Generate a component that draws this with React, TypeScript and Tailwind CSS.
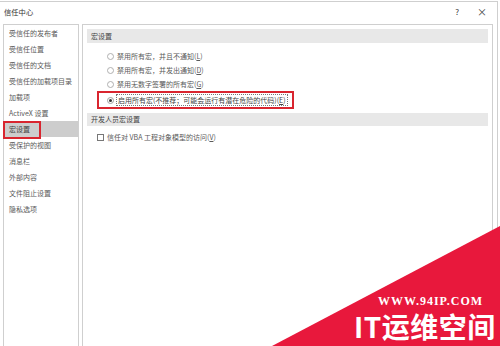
import React from "react";

const font = { fontFamily: '"Noto Sans CJK SC", "Noto Sans", sans-serif' };

function U({ c }: { c: string }) {
  return <span className="underline underline-offset-1">{c}</span>;
}

export default function App() {
  const nav = [
    "受信任的发布者",
    "受信任位置",
    "受信任的文档",
    "受信任的加载项目录",
    "加载项",
    "ActiveX 设置",
    "宏设置",
    "受保护的视图",
    "消息栏",
    "外部内容",
    "文件阻止设置",
    "隐私选项",
  ];
  return (
    <div
      className="relative w-[500px] h-[346px] overflow-hidden bg-white pt-[1px] pr-[2px] text-[7px] text-[#5a5a5a]"
      style={font}
    >
      <div className="h-[345px] border-t border-r border-[#cfcfcf] flex flex-col">
        {/* title bar */}
        <div className="h-[22px] flex items-start pt-[3px] pl-[4px] pr-[10px] text-[#333] leading-[14px]">
          <span className="text-[7.3px]">信任中心</span>
          <span className="ml-auto text-[8px]">?</span>
          <span className="ml-[18px] text-[10px] leading-[13px] text-[#444]">×</span>
        </div>
        {/* body */}
        <div className="flex-1 flex pl-[3px] pr-[4px] gap-[3px]">
          <div className="w-[76px] border-l border-r border-t border-[#cfcfcf] flex flex-col">
            {nav.map((n) =>
              n === "宏设置" ? (
                <div key={n} className="relative h-[16px] leading-[16px] pl-[5px] bg-[#cdcdcd] text-[#444]">
                  {n}
                  <span className="absolute -left-[1px] top-0 w-[38px] h-[18px] border-2 border-[#d9252f]" />
                </div>
              ) : (
                <div key={n} className="h-[16px] leading-[16px] pl-[5px]">
                  {n}
                </div>
              )
            )}
          </div>
          <div className="flex-1 border-l border-r border-t border-[#cfcfcf] pt-[4px] px-[4px]">
            <div className="h-[14px] leading-[14px] bg-[#e8e8e8] pl-[4px] text-[#444]">宏设置</div>
            <div className="mt-[6px] flex flex-col">
              {[
                ["禁用所有宏，并且不通知(", "L", ")"],
                ["禁用所有宏，并发出通知(", "D", ")"],
                ["禁用无数字签署的所有宏(", "G", ")"],
              ].map(([a, b, c]) => (
                <div key={a} className="h-[14px] flex items-center pl-[20px]">
                  <span className="w-[7px] h-[7px] rounded-full border border-[#b0b0b0] bg-white" />
                  <span className="ml-[3px] leading-[10px]">
                    {a}
                    <U c={b} />
                    {c}
                  </span>
                </div>
              ))}
              <div className="ml-[10px] w-[197px] h-[18px] border-2 border-[#d9252f] flex items-center pl-[8px]">
                <span className="w-[7px] h-[7px] rounded-full border border-[#a0a0a0] bg-white flex items-center justify-center">
                  <span className="w-[3px] h-[3px] rounded-full bg-[#333]" />
                </span>
                <span className="ml-[2px] px-[1px] border border-dotted border-[#777] leading-[10px] text-[#444]">
                  启用所有宏(不推荐；可能会运行有潜在危险的代码)(<U c="E" />)
                </span>
              </div>
            </div>
            <div className="mt-[4px] h-[13px] leading-[13px] bg-[#e8e8e8] pl-[4px] text-[#444]">开发人员宏设置</div>
            <div className="mt-[4px] h-[14px] flex items-center pl-[10px]">
              <span className="w-[7px] h-[7px] border border-[#777] bg-white" />
              <span className="ml-[3px] leading-[10px]">
                信任对 VBA 工程对象模型的访问(<U c="V" />)
              </span>
            </div>
          </div>
        </div>
      </div>

      {/* watermark overlay */}
      <svg className="absolute left-0 top-0" width="500" height="346" viewBox="0 0 500 346">
        <polygon points="500,226 500,346 272,346" fill="#e8183c" />
      </svg>
      <div
        className="absolute left-[378px] top-[295px] text-white font-bold text-[12px] leading-[12px] tracking-[1px]"
        style={{ fontFamily: '"Liberation Serif", serif' }}
      >
        WWW.94IP.COM
      </div>
      <div
        className="absolute left-[354px] top-[312px] text-white font-bold text-[28px] leading-[28px] tracking-[0.5px]"
        style={font}
      >
        IT运维空间
      </div>
    </div>
  );
}
